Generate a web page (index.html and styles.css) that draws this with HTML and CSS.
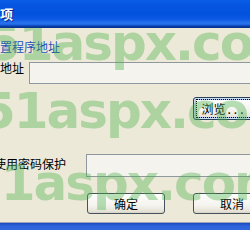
FILE: index.html
```html
<!DOCTYPE html>
<html lang="zh-CN">
<head>
<meta charset="utf-8">
<title>选项</title>
<link rel="stylesheet" href="styles.css">
</head>
<body>
<div class="window">
  <div class="titlebar"><span class="title">项</span></div>
  <div class="client">
    <div class="group-label">设置程序地址</div>
    <div class="row row-path">
      <span class="label label-path">地址</span>
      <div class="textbox"></div>
    </div>
    <div class="row row-browse">
      <button class="btn btn-default"><span class="focus">浏览<span class="dots">...</span></span></button>
    </div>
    <div class="row row-pwd">
      <span class="label label-pwd">使用密码保护</span>
      <div class="textbox textbox-pwd"></div>
    </div>
    <div class="row row-actions">
      <button class="btn btn-action">确定</button>
      <button class="btn btn-action">取消</button>
    </div>
    <div class="watermark">
      <div class="wm wm1">51aspx.com</div>
      <div class="wm wm2">51aspx.com</div>
      <div class="wm wm3">51aspx.com</div>
    </div>
  </div>
  <div class="taskbar"></div>
</div>
</body>
</html>
```

FILE: styles.css
```css
* { box-sizing: border-box; }
html, body { margin: 0; padding: 0; }
body {
  width: 250px;
  height: 230px;
  overflow: hidden;
  background: #ECE9D8;
  font-family: "Noto Sans CJK SC", "Liberation Sans", sans-serif;
  font-size: 12px;
  color: #000;
}
.window {
  display: flex;
  flex-direction: column;
  height: 230px;
}
.titlebar {
  flex: none;
  height: 28px;
  display: flex;
  align-items: center;
  background: linear-gradient(to bottom,
    #0B5EE8 0px, #0656E2 4px, #0352DE 14px, #0A58E4 19px,
    #2A74EE 23px, #1C62E0 25px, #0A3EA8 26px, #08308A 28px);
}
.title {
  color: #fff;
  font-weight: bold;
  font-size: 13px;
  line-height: 14px;
  text-shadow: 1px 1px 0 #0a2a8a;
}
.client {
  position: relative;
  flex: none;
  height: 194px;
  background: #ECE9D8;
  overflow: hidden;
  padding-top: 12px;
}
.group-label {
  color: #1b4fb8;
  line-height: 14px;
  margin-left: -12px;
  white-space: nowrap;
}
.row { display: flex; }
.label { line-height: 14px; white-space: nowrap; }
.row-path { margin-top: 8px; align-items: flex-start; }
.label-path { width: 29px; margin-top: -1px; }
.textbox {
  flex: 1;
  margin-right: -10px;
  height: 22px;
  border: 1px solid #8f989e;
  background: #F4F3EE;
}
.row-browse { margin-top: 13px; padding-left: 193px; }
.btn {
  font-family: inherit;
  font-size: 12px;
  color: #000;
  padding: 0;
  border: 1px solid #46535c;
  border-radius: 3px;
  background: linear-gradient(to bottom, #FEFEFD 0%, #F4F3EE 60%, #E6E3D8 90%, #D6D2C4 100%);
  display: flex;
  align-items: center;
  justify-content: center;
  flex: none;
}
.btn-default {
  width: 62px;
  height: 23px;
  border-color: #2a4258;
  box-shadow: inset 0 0 0 1px #C9DDF5, inset 0 0 0 2px #A9C4EC;
}
.focus {
  display: flex;
  align-items: center;
  justify-content: center;
  width: 54px;
  height: 17px;
  outline: 1px dotted #000;
  line-height: 14px;
}
.dots { letter-spacing: 3px; margin-left: 2px; }
.row-pwd { margin-top: 34px; align-items: center; }
.label-pwd { width: 92px; margin-left: -6px; margin-top: -4px; }
.textbox-pwd { height: 23px; }
.row-actions { margin-top: 16px; padding-left: 87px; gap: 28px; }
.btn-action { width: 78px; height: 21px; line-height: 14px; }
.watermark {
  position: absolute;
  left: 0; top: 0; right: 0; bottom: 0;
  pointer-events: none;
}
.wm {
  position: absolute;
  white-space: nowrap;
  font-family: "DejaVu Sans", sans-serif;
  font-weight: bold;
  font-size: 50px;
  line-height: 50px;
  letter-spacing: -2px;
  color: rgba(70, 175, 70, 0.38);
}
.wm1 { top: -10px; left: -14px; }
.wm2 { top: 58px; left: -19px; }
.wm3 { top: 130px; left: -32px; }
.taskbar {
  flex: 1;
  border-top: 1px solid #9aa3b8;
  background: linear-gradient(to bottom, #1A49C0 0, #2C62DA 3px, #3169DC 100%);
}
```
